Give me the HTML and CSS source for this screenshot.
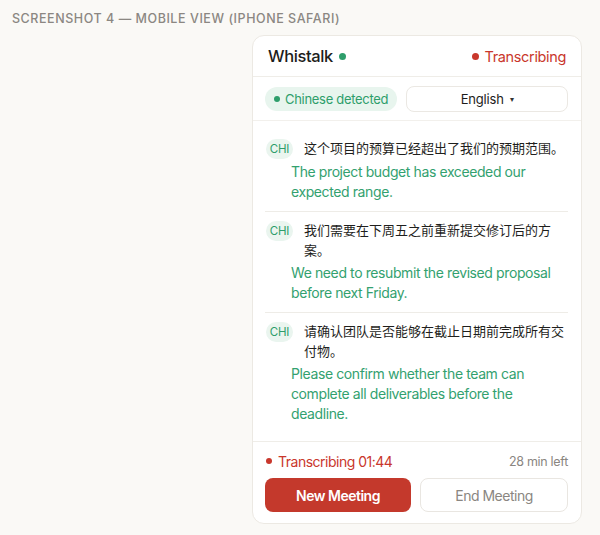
FILE: index.html
```html
<!DOCTYPE html>
<html lang="en">
<head>
<meta charset="utf-8">
<link rel="stylesheet" href="styles.css">
</head>
<body>
<div class="caption">Screenshot 4 — Mobile view (iPhone Safari)</div>
<div class="card">
  <div class="header">
    <div class="brand">Whistalk<span class="dot green"></span></div>
    <div class="status"><span class="dot red"></span>Transcribing</div>
  </div>
  <div class="langs">
    <div class="detected"><span class="dot green small"></span>Chinese detected</div>
    <div class="select">English <span class="caret">▾</span></div>
  </div>
  <div class="list">
    <div class="entry">
      <div class="src"><span class="badge">CHI</span><span class="zh">这个项目的预算已经超出了我们的预期范围。</span></div>
      <div class="en">The project budget has exceeded our expected range.</div>
    </div>
    <div class="entry">
      <div class="src"><span class="badge">CHI</span><span class="zh">我们需要在下周五之前重新提交修订后的方案。</span></div>
      <div class="en">We need to resubmit the revised proposal before next Friday.</div>
    </div>
    <div class="entry">
      <div class="src"><span class="badge">CHI</span><span class="zh">请确认团队是否能够在截止日期前完成所有交付物。</span></div>
      <div class="en">Please confirm whether the team can complete all deliverables before the deadline.</div>
    </div>
  </div>
  <div class="footer">
    <div class="meta">
      <div class="live"><span class="dot red small"></span>Transcribing 01:44</div>
      <div class="left">28 min left</div>
    </div>
    <div class="actions">
      <button class="btn primary">New Meeting</button>
      <button class="btn ghost">End Meeting</button>
    </div>
  </div>
</div>
</body>
</html>
```
FILE: styles.css
```css
* { box-sizing: border-box; }
body {
  margin: 0;
  background: #faf9f6;
  font-family: Inter, "Noto Sans", "Noto Sans CJK SC", sans-serif;
  color: #1d1d1b;
}
.caption {
  padding: 11px 12px 0;
  height: 26px;
  font-size: 12.5px;
  line-height: 16px;
  letter-spacing: 0.55px;
  text-transform: uppercase;
  color: #8b8782;
  font-weight: 500;
}
.card {
  margin: 9px 0 0 252px;
  width: 330px;
  background: #fff;
  border: 1px solid #ece9e3;
  border-radius: 12px;
}
.header {
  height: 41px;
  padding: 0 15px 0 15px;
  display: flex;
  align-items: center;
  justify-content: space-between;
  border-bottom: 1px solid #efede8;
}
.brand {
  font-size: 16.5px;
  font-weight: 500;
  display: flex;
  align-items: center;
  gap: 6px;
  letter-spacing: -0.4px;
}
.dot {
  display: inline-block;
  width: 7px;
  height: 7px;
  border-radius: 50%;
}
.dot.small { width: 6px; height: 6px; }
.green { background: #2e9e6b; }
.red { background: #c9372c; }
.status {
  color: #c9372c;
  font-size: 14.5px;
  letter-spacing: -0.35px;
  display: flex;
  align-items: center;
  gap: 6px;
}
.langs {
  height: 44px;
  padding: 0 13px 0 12px;
  display: flex;
  align-items: center;
  gap: 9px;
  border-bottom: 1px solid #f2f0ec;
}
.detected {
  background: #e8f5ee;
  color: #2e9e6b;
  font-size: 13px;
  letter-spacing: -0.3px;
  height: 24px;
  padding: 0 9px 0 9px;
  border-radius: 12px;
  display: flex;
  align-items: center;
  gap: 5px;
  white-space: nowrap;
}
.select {
  flex: 1;
  height: 26px;
  border: 1px solid #ebe8e3;
  border-radius: 8px;
  display: flex;
  align-items: center;
  justify-content: center;
  font-size: 13px;
  letter-spacing: -0.2px;
  gap: 6px;
}
.caret { font-size: 8px; color: #333; }
.list { padding: 9px 13px 8px 12px; }
.entry {
  padding: 8px 0 9px 1px;
  border-bottom: 1px solid #eeece7;
}
.entry:last-child { border-bottom: 0; }
.src { display: flex; align-items: flex-start; gap: 11px; }
.badge {
  flex: none;
  margin-top: 1px;
  width: 27px;
  height: 20px;
  border-radius: 10px;
  background: #eaf5ef;
  color: #2e9e6b;
  font-size: 11.5px;
  line-height: 20px;
  text-align: center;
  letter-spacing: -0.2px;
}
.zh {
  font-family: "Noto Sans CJK SC", sans-serif;
  font-size: 13px;
  line-height: 20px;
  color: #1f1f1d;
}
.en {
  margin: 3px 0 0 25px;
  font-size: 14px;
  line-height: 20px;
  letter-spacing: -0.4px;
  color: #33a16f;
}
.footer {
  border-top: 1px solid #efede8;
  padding: 9px 13px 11px 12px;
}
.meta {
  display: flex;
  justify-content: space-between;
  align-items: center;
  height: 20px;
}
.live {
  color: #c9372c;
  font-size: 14px;
  letter-spacing: -0.5px;
  display: flex;
  align-items: center;
  gap: 6px;
  padding-left: 1px;
}
.left { color: #8a8681; font-size: 12.5px; letter-spacing: -0.3px; }
.actions {
  margin-top: 7px;
  display: flex;
  gap: 9px;
}
.btn {
  flex: 1;
  height: 34px;
  border-radius: 8px;
  font-family: inherit;
  font-size: 14px;
  letter-spacing: -0.5px;
}
.primary {
  background: #c4392c;
  color: #fff;
  border: 0;
  font-weight: 600;
}
.ghost {
  background: #fff;
  color: #8a8681;
  border: 1px solid #e9e6e1;
}
```
